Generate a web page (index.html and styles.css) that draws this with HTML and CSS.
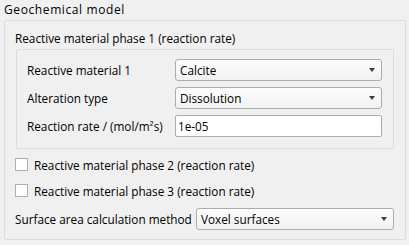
FILE: index.html
```html
<!DOCTYPE html>
<html>
<head>
<meta charset="utf-8">
<link rel="stylesheet" href="styles.css">
</head>
<body>
<div class="page">
  <div class="gb-title outer-title">Geochemical model</div>
  <div class="gb outer">
    <div class="gb-title inner-title">Reactive material phase 1 (reaction rate)</div>
    <div class="gb inner">
      <div class="form">
        <span class="lbl">Reactive material 1</span>
        <div class="combo"><span>Calcite</span><span class="arrow"></span></div>
        <span class="lbl">Alteration type</span>
        <div class="combo"><span>Dissolution</span><span class="arrow"></span></div>
        <span class="lbl">Reaction rate / (mol/m²s)</span>
        <div class="edit">1e-05</div>
      </div>
    </div>
    <div class="check first"><span class="box"></span><span>Reactive material phase 2 (reaction rate)</span></div>
    <div class="check"><span class="box"></span><span>Reactive material phase 3 (reaction rate)</span></div>
    <div class="row">
      <span class="lbl">Surface area calculation method</span>
      <div class="combo wide"><span>Voxel surfaces</span><span class="arrow"></span></div>
    </div>
  </div>
</div>
</body>
</html>
```
FILE: styles.css
```css
html, body {
  margin: 0;
  padding: 0;
  background: #f0f0f0;
}
body {
  font-family: "Open Sans", "Noto Sans", sans-serif;
  font-size: 11.75px;
  color: #000;
  width: 409px;
  height: 245px;
  overflow: hidden;
}
.page {
  display: flex;
  flex-direction: column;
}
.gb-title {
  height: 16px;
  line-height: 16px;
  white-space: nowrap;
}
.outer-title {
  margin-top: 2px;
  padding-left: 4px;
  font-size: 12px;
  letter-spacing: 0.6px;
}
.gb {
  box-sizing: border-box;
  border: 1px solid #dcdcdc;
  border-radius: 2px;
}
.outer {
  margin-top: 2px;
  margin-left: 4px;
  width: 402px;
  height: 220px;
  padding: 0 11px 0 10px;
  display: flex;
  flex-direction: column;
}
.inner-title {
  margin-top: 9px;
}
.inner {
  margin-top: 3px;
  margin-left: 1px;
  width: 378px;
  height: 100px;
  padding: 9px 11px 11px 10px;
}
.form {
  display: grid;
  grid-template-columns: 148px 207px;
  row-gap: 6px;
  align-items: center;
}
.lbl {
  white-space: nowrap;
}
.combo, .edit {
  box-sizing: border-box;
  height: 22px;
  display: flex;
  align-items: center;
  padding-left: 4px;
  white-space: nowrap;
}
.combo {
  border: 1px solid #acacac;
  border-radius: 3px;
  background: linear-gradient(#fdfdfd, #f1f1f1);
  justify-content: space-between;
  padding-right: 6px;
}
.edit {
  border: 1px solid #abadb3;
  border-radius: 2px;
  background: #fff;
  padding-left: 2px;
}
.arrow {
  width: 0;
  height: 0;
  border-left: 3.5px solid transparent;
  border-right: 3.5px solid transparent;
  border-top: 4px solid #3c3c3c;
}
.check {
  display: flex;
  align-items: center;
  height: 17px;
  margin-top: 9px;
  white-space: nowrap;
}
.check.first {
  margin-top: 7px;
}
.box {
  box-sizing: border-box;
  width: 13px;
  height: 13px;
  border: 1px solid #b0b0b0;
  background: #fff;
  margin-right: 6px;
  flex: none;
}
.row {
  display: flex;
  align-items: center;
  justify-content: space-between;
  margin-top: 9px;
  height: 22px;
}
.combo.wide {
  width: 198px;
}
```
